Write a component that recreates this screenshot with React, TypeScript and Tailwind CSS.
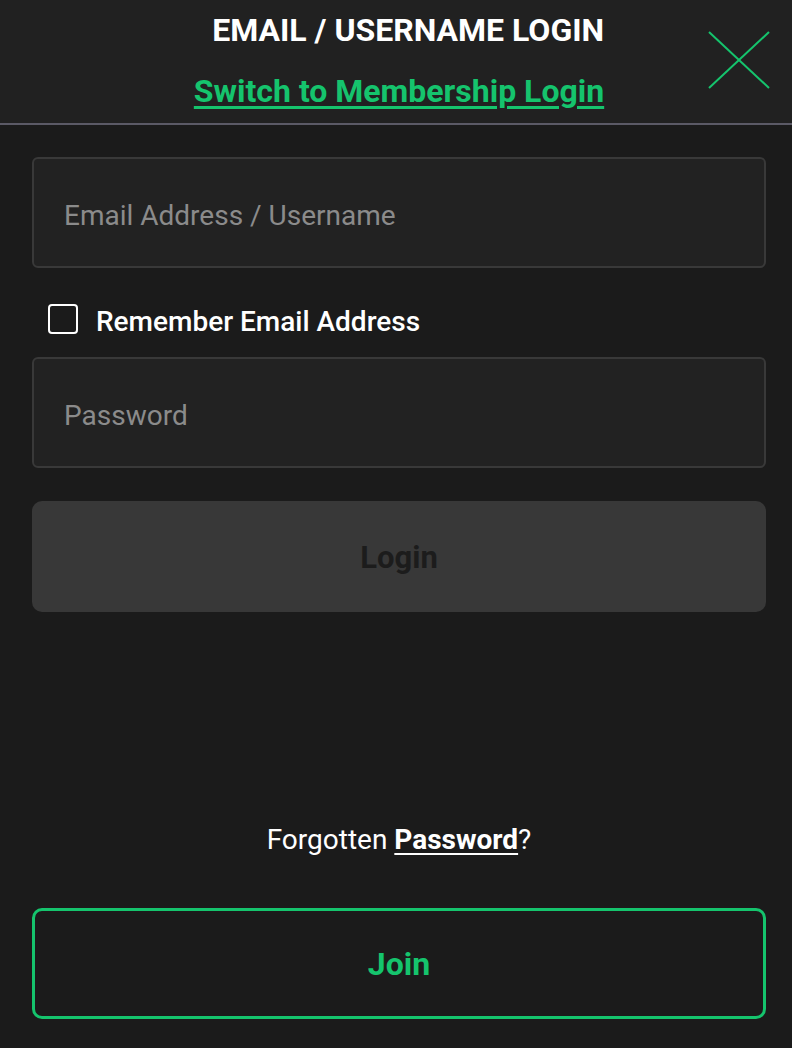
import { useState } from "react";

const font = { fontFamily: "Roboto, 'Liberation Sans', sans-serif" };

const Field = ({ placeholder, type = "text" }: { placeholder: string; type?: string }) => (
  <input
    type={type}
    placeholder={placeholder}
    className="h-[111px] w-full rounded-md border-2 border-[#393939] bg-[#222222] px-[30px] pt-[5px] text-[28px] text-white outline-none placeholder:text-[#8b8b8b]"
  />
);

export default function App() {
  const [remember, setRemember] = useState(false);

  return (
    <div className="min-h-[1048px] w-full bg-[#1b1b1b]" style={font}>
      {/* header */}
      <div className="relative h-[125px] border-b-2 border-[#5b5a66] bg-[#212121]">
        <div className="mx-auto flex w-fit translate-x-[3px] flex-col items-end pt-[10px]">
          <h1 className="text-[32px] font-bold leading-[40px] text-white">EMAIL / USERNAME LOGIN</h1>
          <a
            href="#"
            className="mt-[23px] text-[32px] font-bold leading-[36px] text-[#15c46d] underline decoration-[3px] underline-offset-[4px]"
          >
            Switch to Membership Login
          </a>
        </div>
        <button className="absolute right-[22px] top-[31px] h-[58px] w-[62px]" aria-label="Close">
          <svg viewBox="0 0 62 58" className="h-full w-full" fill="none" stroke="#15c46d" strokeWidth="2">
            <line x1="1" y1="1" x2="61" y2="57" />
            <line x1="61" y1="1" x2="1" y2="57" />
          </svg>
        </button>
      </div>

      {/* form */}
      <div className="flex flex-col pl-[32px] pr-[26px] pt-[32px] pb-[29px]">
        <Field placeholder="Email Address / Username" />

        <label className="flex cursor-pointer items-center gap-[18px] pl-[16px] pt-[36px] pb-[23px]">
          <span
            onClick={() => setRemember(!remember)}
            className="flex h-[30px] w-[30px] items-center justify-center rounded-[4px] border-2 border-white"
          >
            {remember && <span className="h-[14px] w-[14px] rounded-sm bg-white" />}
          </span>
          <span className="translate-y-[3px] text-[28px] font-medium leading-[30px] text-white">
            Remember Email Address
          </span>
        </label>

        <Field placeholder="Password" type="password" />

        <button className="mt-[33px] h-[111px] w-full rounded-[10px] bg-[#383838] pt-[4px] text-[31px] font-bold text-[#1c1c1c]">
          Login
        </button>

        <p className="mt-[212px] text-center text-[28px] leading-[32px] text-white">
          Forgotten{" "}
          <a href="#" className="font-bold underline decoration-2 underline-offset-[4px]">
            Password
          </a>
          ?
        </p>

        <button className="mt-[52px] h-[111px] w-full rounded-[10px] border-[3px] border-[#15c46d] text-[32px] font-bold text-[#15c46d]">
          Join
        </button>
      </div>
    </div>
  );
}
